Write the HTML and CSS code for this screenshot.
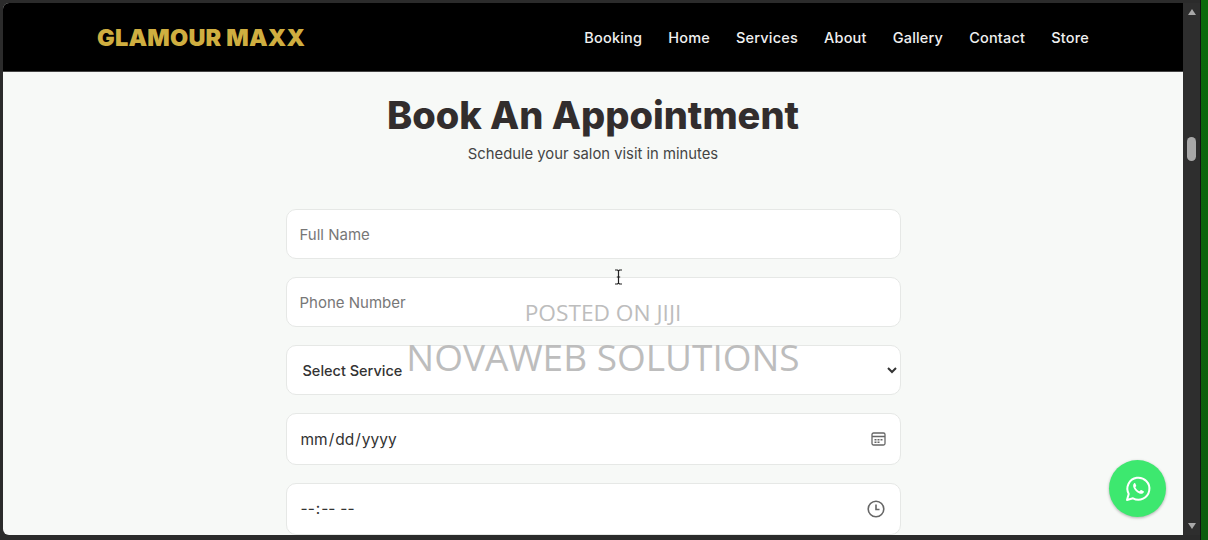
FILE: index.html
```html
<!DOCTYPE html>
<html lang="en">
<head>
    <meta charset="UTF-8">
    <meta name="viewport" content="width=device-width, initial-scale=1.0">
    <title>Glamour Maxx</title>
    <link rel="stylesheet" href="styles.css">
</head>
<body>
    <div class="screen">
        <div class="window">
            <header class="navbar">
                <div class="logo">GLAMOUR MAXX</div>
                <nav class="nav-links">
                    <a href="#">Booking</a>
                    <a href="#">Home</a>
                    <a href="#">Services</a>
                    <a href="#">About</a>
                    <a href="#">Gallery</a>
                    <a href="#">Contact</a>
                    <a href="#">Store</a>
                </nav>
            </header>

            <main class="booking">
                <h1>Book An Appointment</h1>
                <p class="subtitle">Schedule your salon visit in minutes</p>
                <form class="booking-form">
                    <input type="text" placeholder="Full Name">
                    <input type="tel" placeholder="Phone Number">
                    <select>
                        <option>Select Service</option>
                    </select>
                    <div class="field">
                        <input class="tall" type="date">
                        <svg class="field-icon calendar" width="15" height="15" viewBox="0 0 15 15">
                            <rect x="1" y="1.500" width="13" height="12" rx="1.500" fill="none" stroke="#666" stroke-width="1.300"/>
                            <path d="M1 5h13" stroke="#666" stroke-width="1.300"/>
                            <path d="M3.500 7.500h2v1.500h-2zM6.500 7.500h2v1.500h-2zM9.500 7.500h2v1.500h-2zM3.500 10h2v1.500h-2zM6.500 10h2v1.500h-2z" fill="#666"/>
                        </svg>
                    </div>
                    <div class="field">
                        <input class="tall" type="time">
                        <svg class="field-icon clock" width="18" height="18" viewBox="0 0 18 18">
                            <circle cx="9" cy="9" r="7.800" fill="none" stroke="#666" stroke-width="1.600"/>
                            <path d="M9 4.500V9.500h3.500" fill="none" stroke="#666" stroke-width="1.600"/>
                        </svg>
                    </div>
                </form>
            </main>

            <div class="watermark">
                <span class="mark-small">POSTED ON JIJI</span>
                <span class="mark-large">NOVAWEB SOLUTIONS</span>
            </div>

            <svg class="text-cursor" width="9" height="16" viewBox="0 0 9 16">
                <path d="M1 1h2.500l1 1 1-1H8M4.500 2v12M1 15h2.500l1-1 1 1H8M2.800 8h3.400" fill="none" stroke="#222" stroke-width="1.200"/>
            </svg>

            <a class="whatsapp" href="#">
                <svg width="28" height="28" viewBox="0 0 28 28">
                    <path d="M3 25l1.700-6.100A11 11 0 1 1 9 23.300z" fill="none" stroke="#fff" stroke-width="2" stroke-linejoin="round"/>
                    <path d="M10.300 8.300c-1.300 1-1.500 2.700-.6 4.600 1.200 2.500 3.200 4.500 5.700 5.500 1.900.8 3.500.4 4.300-1 .3-.5.300-1 0-1.200l-2.400-1.200c-.3-.1-.6 0-.8.2l-.9 1.100c-1.900-.7-3.400-2.200-4.300-4.100l.8-.9c.2-.3.200-.5.1-.8l-1-2.300c-.2-.3-.8-.3-1-.1z" fill="#fff"/>
                </svg>
            </a>
        </div>

        <div class="scrollbar">
            <span class="arrow-up"></span>
            <span class="thumb"></span>
            <span class="arrow-down"></span>
        </div>
        <div class="edge"></div>
    </div>
</body>
</html>
```

FILE: styles.css
```css
* {
    margin: 0;
    padding: 0;
    box-sizing: border-box;
}

html, body {
    height: 100%;
    overflow: hidden;
}

body {
    background: #2b2b2b;
    font-family: "Inter", "Liberation Sans", sans-serif;
}

.screen {
    display: flex;
    height: 540px;
    padding-top: 3px;
}

.window {
    position: relative;
    flex: 1;
    height: 532px;
    margin-left: 3px;
    overflow: hidden;
    background: #f7f9f7;
    border-radius: 6px 0 0 6px;
}

.navbar {
    display: flex;
    align-items: center;
    justify-content: space-between;
    height: 69px;
    padding: 0 94px 0 94px;
    background: #000;
    border-bottom: 1px solid #444;
}

.logo {
    font-size: 23.500px;
    font-weight: 900;
    letter-spacing: 0.2px;
    color: #cfae40;
}

.nav-links {
    display: flex;
    gap: 26px;
}

.nav-links a {
    color: #f0f0f0;
    font-size: 14.500px;
    font-weight: 500;
    letter-spacing: 0.200px;
    text-decoration: none;
}

.booking {
    display: flex;
    flex-direction: column;
    align-items: center;
    padding-top: 21px;
}

h1 {
    font-size: 38px;
    line-height: 44px;
    font-weight: 800;
    color: #322d2d;
}

.subtitle {
    margin-top: 7px;
    font-size: 14.800px;
    line-height: 20px;
    color: #444;
}

.booking-form {
    display: flex;
    flex-direction: column;
    gap: 18px;
    width: 615px;
    margin-top: 45px;
}

.field {
    position: relative;
}

.booking-form input,
.booking-form select {
    display: block;
    width: 100%;
    height: 50px;
    padding: 0 13px;
    background: #fff;
    border: 1px solid #e6e8e6;
    border-radius: 10px;
    font-family: inherit;
    font-size: 15px;
    color: #333;
    outline: none;
}

.booking-form .tall {
    height: 52px;
    font-size: 15.500px;
}

.booking-form .tall::-webkit-calendar-picker-indicator {
    opacity: 0;
}

.booking-form input::placeholder {
    color: #777;
}

.booking-form select {
    padding: 0 12px;
    font-size: 14.500px;
    font-weight: 500;
    color: #333;
}

.field-icon {
    position: absolute;
    top: 50%;
    transform: translateY(-50%);
}

.calendar {
    right: 15px;
}

.clock {
    right: 16px;
}

.watermark {
    position: absolute;
    top: 295px;
    left: 0;
    width: 1200px;
    display: flex;
    flex-direction: column;
    align-items: center;
    gap: 6px;
    font-family: "Open Sans", sans-serif;
    color: #bdbdbd;
    pointer-events: none;
}

.mark-small {
    font-size: 22.700px;
    line-height: 30px;
}

.mark-large {
    font-size: 37px;
    line-height: 46px;
}

.text-cursor {
    position: absolute;
    top: 266px;
    left: 611px;
}

.whatsapp {
    position: absolute;
    top: 457px;
    left: 1106px;
    display: flex;
    align-items: center;
    justify-content: center;
    width: 57px;
    height: 57px;
    background: #3de86f;
    border-radius: 50%;
    box-shadow: 0 1px 3px rgba(0, 0, 0, 0.3);
}

.scrollbar {
    display: flex;
    flex-direction: column;
    align-items: center;
    width: 17px;
    height: 532px;
    padding: 6px 0;
    background: #2e2e2e;
}

.arrow-up, .arrow-down {
    width: 0;
    height: 0;
    border-left: 4px solid transparent;
    border-right: 4px solid transparent;
}

.arrow-up {
    border-bottom: 6px solid #a8a8a8;
}

.arrow-down {
    margin-top: auto;
    border-top: 6px solid #a8a8a8;
}

.thumb {
    width: 9px;
    height: 24px;
    margin-top: 122px;
    background: #a8a8a8;
    border-radius: 5px;
}

.edge {
    width: 8px;
    margin-top: -3px;
    height: 540px;
    background: linear-gradient(#0b6a0b, #0d5c0d);
    border-left: 1px solid #111;
}
```
